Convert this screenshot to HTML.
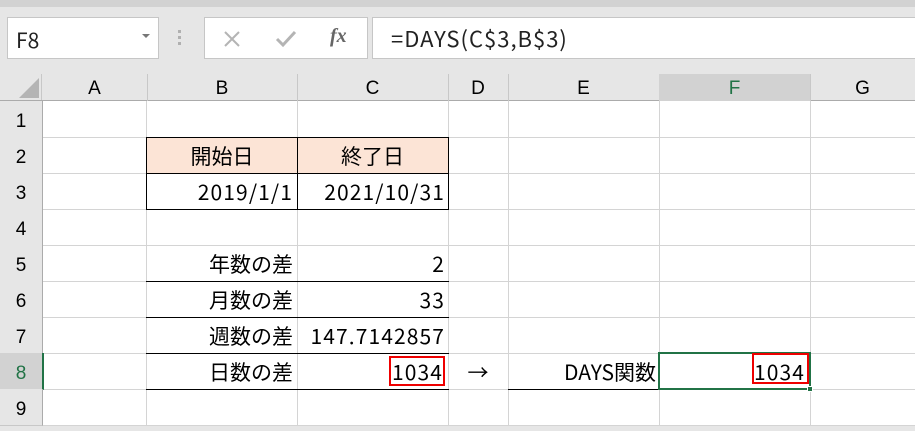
<!DOCTYPE html>
<html><head><meta charset="utf-8"><style>
body{margin:0;width:915px;height:426px;overflow:hidden;background:#e6e6e6;font-family:"Liberation Sans","Noto Sans CJK JP",sans-serif;position:relative}
.a{position:absolute;box-sizing:border-box}
.ch{position:absolute;top:74px;height:27px;font-size:19px;text-align:center;line-height:30px;color:#000;border-right:1px solid #c8c8c8}
.rh{position:absolute;left:0;width:42px;height:36px;font-size:19px;text-align:center;line-height:42px;border-bottom:1px solid #c8c8c8;border-right:1px solid #ababab;background:#e6e6e6}
.vl{position:absolute;top:101px;width:1px;height:325px;background:#d4d4d4}
.hl{position:absolute;left:42px;width:873px;height:1px;background:#d4d4d4}
.t{position:absolute;font-family:"Noto Sans CJK JP",sans-serif;font-size:21px;line-height:38px;height:36px;color:#000;white-space:nowrap}
.n{letter-spacing:1.1px}
.r{text-align:right}
.bl{position:absolute;height:1px;background:#000}
</style></head><body>
<div class="a" style="left:0;top:0;width:915px;height:7px;background:#d2d2d2"></div>
<div class="a" style="left:7px;top:17px;width:152px;height:42px;background:#fff;border:1px solid #c6c6c6;font-family:'Noto Sans CJK JP',sans-serif;font-size:21px;line-height:44px;padding-left:8px;color:#222">F8</div>
<div class="a" style="left:142px;top:34px;width:0;height:0;border-left:4px solid transparent;border-right:4px solid transparent;border-top:4px solid #777"></div>
<div class="a" style="left:178px;top:30px;width:3px;height:3px;background:#b0b0b0;box-shadow:0 6px 0 #b0b0b0,0 12px 0 #b0b0b0"></div>
<div class="a" style="left:204px;top:17px;width:164px;height:42px;background:#fff;border:1px solid #c6c6c6"></div>
<svg class="a" style="left:222px;top:29px" width="20" height="20"><path d="M3 3L17 17M17 3L3 17" stroke="#b4b4b4" stroke-width="2"/></svg>
<svg class="a" style="left:274px;top:29px" width="24" height="20"><path d="M3 10L9 16L21 3" stroke="#b4b4b4" stroke-width="3" fill="none"/></svg>
<div class="a" style="left:330px;top:25px;font-family:'Liberation Serif',serif;font-style:italic;font-weight:bold;font-size:20px;color:#666">fx</div>
<div class="a" style="left:372px;top:17px;width:545px;height:42px;background:#fff;border:1px solid #c6c6c6;font-family:'Noto Sans CJK JP',sans-serif;font-size:22px;letter-spacing:1px;line-height:40px;padding-left:18px;color:#222">=DAYS(C$3,B$3)</div>
<div class="a" style="left:0;top:74px;width:42px;height:27px;border-right:1px solid #c8c8c8"></div>
<svg class="a" style="left:19px;top:78px" width="20" height="20"><path d="M20 0L20 20L0 20Z" fill="#b4b4b4"/></svg>
<div class="a" style="left:0;top:100px;width:915px;height:1px;background:#ababab"></div>
<div class="ch" style="left:42px;width:105px">A</div>
<div class="ch" style="left:147px;width:150px">B</div>
<div class="ch" style="left:297px;width:151px">C</div>
<div class="ch" style="left:448px;width:60px">D</div>
<div class="ch" style="left:508px;width:151px">E</div>
<div class="ch" style="left:659px;width:151px;background:#d2d2d2;color:#217346;border-bottom:2px solid #217346;height:28px">F</div>
<div class="ch" style="left:810px;width:105px;border-right:none">G</div>
<div class="a" style="left:42px;top:101px;width:873px;height:325px;background:#fff"></div>
<div class="vl" style="left:146px"></div><div class="vl" style="left:297px"></div><div class="vl" style="left:448px"></div><div class="vl" style="left:508px"></div><div class="vl" style="left:659px"></div><div class="vl" style="left:810px"></div>
<div class="hl" style="top:137px"></div><div class="hl" style="top:173px"></div><div class="hl" style="top:209px"></div><div class="hl" style="top:245px"></div><div class="hl" style="top:281px"></div><div class="hl" style="top:317px"></div><div class="hl" style="top:353px"></div><div class="hl" style="top:389px"></div><div class="hl" style="top:425px"></div>
<div class="rh" style="top:101px">1</div><div class="rh" style="top:137px">2</div><div class="rh" style="top:173px">3</div><div class="rh" style="top:209px">4</div><div class="rh" style="top:245px">5</div><div class="rh" style="top:281px">6</div><div class="rh" style="top:317px">7</div>
<div class="rh" style="top:353px;background:#d2d2d2;color:#217346;border-right:2px solid #217346">8</div><div class="rh" style="top:389px">9</div>
<div class="a" style="left:146px;top:137px;width:303px;height:37px;background:#fce4d6"></div>
<div class="a" style="left:146px;top:137px;width:303px;height:73px;border:1px solid #000"></div>
<div class="a" style="left:146px;top:173px;width:303px;height:1px;background:#000"></div>
<div class="a" style="left:297px;top:137px;width:1px;height:73px;background:#000"></div>
<div class="t" style="left:147px;top:137px;width:150px;text-align:center">開始日</div>
<div class="t" style="left:297px;top:137px;width:151px;text-align:center">終了日</div>
<div class="t r n" style="left:147px;top:173px;width:146px">2019/1/1</div>
<div class="t r n" style="left:297px;top:173px;width:148px">2021/10/31</div>
<div class="bl" style="left:146px;top:281px;width:303px"></div>
<div class="bl" style="left:146px;top:317px;width:303px"></div>
<div class="bl" style="left:146px;top:353px;width:303px"></div>
<div class="bl" style="left:146px;top:389px;width:303px"></div>
<div class="bl" style="left:508px;top:389px;width:151px"></div>
<div class="t r" style="left:147px;top:245px;width:146px">年数の差</div>
<div class="t r" style="left:147px;top:281px;width:146px">月数の差</div>
<div class="t r" style="left:147px;top:317px;width:146px">週数の差</div>
<div class="t r" style="left:147px;top:353px;width:146px">日数の差</div>
<div class="t r n" style="left:297px;top:245px;width:148px">2</div>
<div class="t r n" style="left:297px;top:281px;width:148px">33</div>
<div class="t r n" style="left:297px;top:317px;width:148px">147.7142857</div>
<div class="t r n" style="left:297px;top:353px;width:146px">1034</div>
<div class="a" style="left:389px;top:356px;width:56px;height:30px;border:2px solid #e00"></div>
<div class="t" style="left:448px;top:353px;width:60px;text-align:center">→</div>
<div class="t r" style="left:508px;top:353px;width:148px">DAYS関数</div>
<div class="a" style="left:658px;top:352px;width:153px;height:38px;border:2px solid #217346"></div>
<div class="a" style="left:807px;top:386px;width:6px;height:6px;background:#217346;border:1px solid #fff"></div>
<div class="t r n" style="left:659px;top:353px;width:146px">1034</div>
<div class="a" style="left:752px;top:353px;width:57px;height:31px;border:2px solid #e00"></div>
</body></html>
